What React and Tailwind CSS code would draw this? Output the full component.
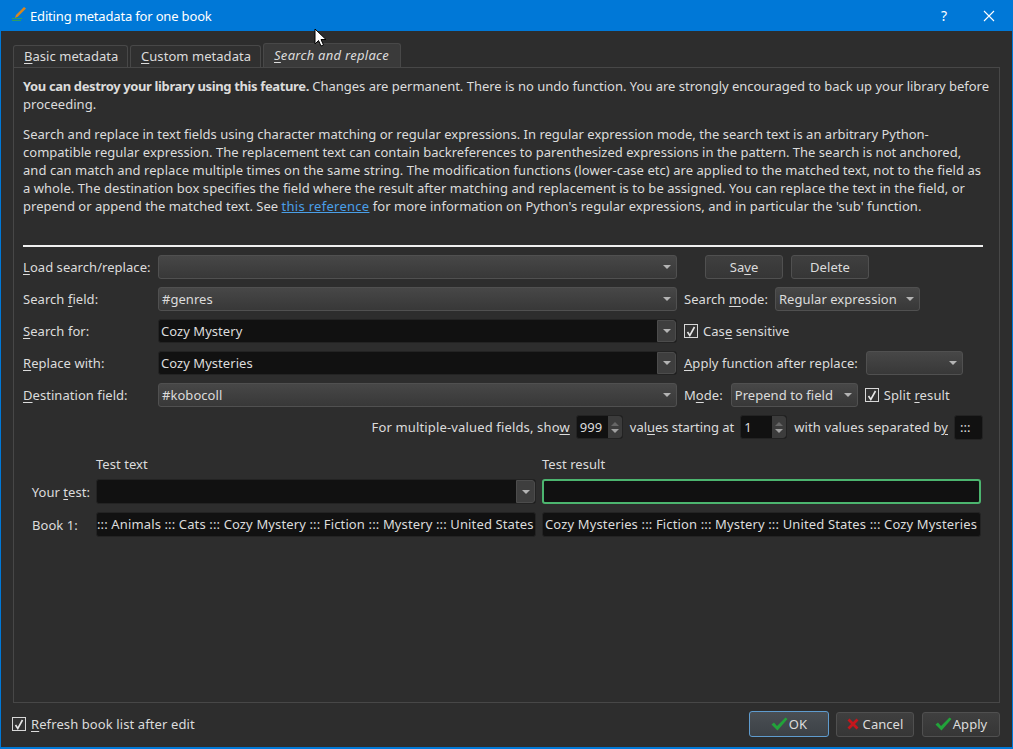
import React from "react";

const U = ({ children }) => <span className="underline underline-offset-2 decoration-1">{children}</span>;

function Arrow() {
    return <span className="w-0 h-0 border-x-[4px] border-x-transparent border-t-[4px] border-t-[#b4b4b4]"></span>;
}

function Combo({ value, className = "" }) {
    return (
        <div className={`h-[24px] flex items-center justify-between pl-[3px] pr-[5px] rounded-[3px] border border-[#505050] bg-gradient-to-b from-[#474747] to-[#383838] ${className}`}>
            <span className="whitespace-nowrap">{value}</span>
            <Arrow />
        </div>
    );
}

function EditCombo({ value, className = "" }) {
    return (
        <div className={`flex rounded-[3px] border border-[#232323] bg-[#111111] ${className}`}>
            <span className="flex-1 pl-[2px] leading-[22px]">{value}</span>
            <span className="w-[19px] flex items-center justify-center bg-[#3e3e3e] border border-[#4c4c4c] rounded-r-[3px]">
                <Arrow />
            </span>
        </div>
    );
}

function Check({ className = "" }) {
    return (
        <span className={`w-[14px] h-[14px] shrink-0 border border-[#d8d8d8] bg-[#333333] flex items-center justify-center ${className}`}>
            <svg width="10" height="11" viewBox="0 0 10 11" fill="none">
                <path d="M1.5 6 L3.8 9.5 L8.5 1" stroke="#e6e6e6" strokeWidth="1.6" />
            </svg>
        </span>
    );
}

function Spin({ value, className = "" }) {
    return (
        <div className={`h-[24px] flex rounded-[3px] border border-[#232323] bg-[#111111] ${className}`}>
            <span className="flex-1 pl-[3px] leading-[22px]">{value}</span>
            <span className="w-[14px] flex flex-col items-center justify-center gap-[3px] bg-[#3c3c3c] rounded-r-[3px]">
                <span className="w-0 h-0 border-x-[4px] border-x-transparent border-b-[4px] border-b-[#666666]"></span>
                <span className="w-0 h-0 border-x-[4px] border-x-transparent border-t-[4px] border-t-[#a0a0a0]"></span>
            </span>
        </div>
    );
}

function Tab({ active, children, className = "" }) {
    return (
        <div className={`border border-[#484848] border-b-0 rounded-t-[3px] flex items-center pl-[10px] ${active ? "h-[24px] pb-[2px] bg-[#3a3a3a] italic tracking-[0.28px]" : "h-[22px] pb-[1px] bg-[#303030]"} ${className}`}>
            {children}
        </div>
    );
}

function Row({ label, children }) {
    return (
        <div className="flex items-center h-[24px]">
            <div className="w-[135px] shrink-0 whitespace-nowrap">{label}</div>
            {children}
        </div>
    );
}

function PushButton({ children, className = "" }) {
    return (
        <div className={`flex items-center justify-center rounded-[3px] border border-[#505050] bg-gradient-to-b from-[#3f3f3f] to-[#363636] ${className}`}>
            {children}
        </div>
    );
}

const Tick = () => (
    <svg width="17" height="14" viewBox="0 0 17 14">
        <path d="M0.5 7.5 L3 5.5 L6 9 L14.5 0.5 L16.5 2 L6.5 13.5 Z" fill="#22a33a" />
    </svg>
);

export default function App() {
    return (
        <div className="w-[1013px] h-[749px] overflow-hidden relative flex flex-col bg-[#0078d7] text-[13px] leading-[18px] tracking-[0.05px] text-[#dcdcdc] font-['Noto_Sans',sans-serif] pl-[1px] pr-[1px] pb-[2px]">
            {/* title bar */}
            <div className="h-[31px] shrink-0 flex items-center text-white pl-[10px] tracking-[-0.17px]">
                <svg width="16" height="16" viewBox="0 0 16 16" className="mr-[3px] mb-[3px]">
                    <path d="M4 12 L5 9 L13 1 L15 2.5 L7 10.5 Z" fill="#d9861f" />
                    <path d="M1 12.5 H11 M1 14.5 H10" stroke="#2f9e62" strokeWidth="1" />
                </svg>
                <span>Editing metadata for one book</span>
                <span className="ml-auto mr-[36px] text-[14px]">?</span>
                <svg width="12" height="12" viewBox="0 0 12 12" className="mr-[17px]">
                    <path d="M1 1 L11 11 M11 1 L1 11" stroke="#ffffff" strokeWidth="1.1" />
                </svg>
            </div>

            <div className="flex-1 bg-[#2d2d2d] flex flex-col pl-[12px] pr-[12px] min-h-0">
                {/* tabs */}
                <div className="h-[36px] shrink-0 flex items-end gap-[2px]">
                    <Tab className="w-[115px]"><span><U>B</U>asic metadata</span></Tab>
                    <Tab className="w-[131px]"><span><U>C</U>ustom metadata</span></Tab>
                    <Tab active className="w-[138px]"><span><U>S</U>earch and replace</span></Tab>
                </div>

                {/* pane */}
                <div className="h-[636px] shrink-0 border border-[#474747] pl-[9px] pr-[10px] pt-[9px]">
                    <div className="whitespace-pre tracking-[-0.015px]">
                        <span className="font-bold tracking-[-0.37px]">You can destroy your library using this feature.</span>
                        {" Changes are permanent. There is no undo function. You are strongly encouraged to back up your library before"}
                    </div>
                    <div>proceeding.</div>
                    <div className="mt-[12px] whitespace-pre">
                        <div className="tracking-[0.01px]">Search and replace in text fields using character matching or regular expressions. In regular expression mode, the search text is an arbitrary Python-</div>
                        <div className="tracking-[0.015px]">compatible regular expression. The replacement text can contain backreferences to parenthesized expressions in the pattern. The search is not anchored,</div>
                        <div>and can match and replace multiple times on the same string. The modification functions (lower-case etc) are applied to the matched text, not to the field as</div>
                        <div>a whole. The destination box specifies the field where the result after matching and replacement is to be assigned. You can replace the text in the field, or</div>
                        <div className="tracking-[0.02px]">
                            {"prepend or append the matched text. See "}
                            <span className="text-[#4a9fe8] underline tracking-[0.28px]">this reference</span>
                            {" for more information on Python's regular expressions, and in particular the 'sub' function."}
                        </div>
                    </div>

                    <div className="h-[2px] bg-[#f0f0f0] mt-[30px] mr-[6px]"></div>

                    <div className="mt-[8px] flex flex-col gap-[8px]">
                        <Row label={<><U>L</U>oad search/replace:</>}>
                            <Combo value="" className="w-[519px]" />
                            <PushButton className="w-[78px] h-[24px] ml-[28px]"><span>Sa<U>v</U>e</span></PushButton>
                            <PushButton className="w-[78px] h-[24px] ml-[8px]">Delete</PushButton>
                        </Row>
                        <Row label={<>Search <U>f</U>ield:</>}>
                            <Combo value="#genres" className="w-[519px]" />
                            <span className="ml-[7px] whitespace-nowrap">Search <U>m</U>ode:</span>
                            <Combo value="Regular expression" className="w-[145px] ml-[7px]" />
                        </Row>
                        <Row label={<><U>S</U>earch for:</>}>
                            <EditCombo value="Cozy Mystery" className="w-[519px] h-[24px]" />
                            <Check className="ml-[7px]" />
                            <span className="ml-[5px] whitespace-nowrap">Cas<U>e</U> sensitive</span>
                        </Row>
                        <Row label={<><U>R</U>eplace with:</>}>
                            <EditCombo value="Cozy Mysteries" className="w-[519px] h-[24px]" />
                            <span className="ml-[7px] whitespace-nowrap"><U>A</U>pply function after replace:</span>
                            <Combo value="" className="w-[97px] ml-[8px]" />
                        </Row>
                        <Row label={<><U>D</U>estination field:</>}>
                            <Combo value="#kobocoll" className="w-[519px]" />
                            <span className="ml-[7px] whitespace-nowrap">M<U>o</U>de:</span>
                            <Combo value="Prepend to field" className="w-[127px] ml-[8px]" />
                            <Check className="ml-[7px]" />
                            <span className="ml-[5px] whitespace-nowrap tracking-[0.12px]">Split <U>r</U>esult</span>
                        </Row>
                        <div className="flex items-center justify-end h-[24px] pr-[6px]">
                            <span className="whitespace-nowrap tracking-[0.15px]">For multiple-valued fields, sho<U>w</U></span>
                            <Spin value="999" className="w-[47px] ml-[6px]" />
                            <span className="ml-[7px] whitespace-nowrap tracking-[-0.05px]">val<U>u</U>es starting at</span>
                            <Spin value="1" className="w-[47px] ml-[6px]" />
                            <span className="ml-[7px] whitespace-nowrap tracking-[0.12px]">with values separated b<U>y</U></span>
                            <span className="w-[29px] h-[25px] ml-[6px] rounded-[3px] border border-[#232323] bg-[#111111] pl-[5px] leading-[23px]">:::</span>
                        </div>
                    </div>

                    <div className="mt-[16px] grid grid-cols-[67px_440px_439px] gap-x-[6px] gap-y-[8px] items-center">
                        <div className="-mb-[2px]"></div>
                        <div className="-mb-[2px]">Test text</div>
                        <div className="-mb-[2px]">Test result</div>
                        <div className="text-right whitespace-nowrap">Your <U>t</U>est:</div>
                        <EditCombo value="" className="h-[25px]" />
                        <div className="h-[25px] rounded-[3px] border-2 border-[#4cb56f] bg-[#111111]"></div>
                        <div className="pl-[9px]">Book 1:</div>
                        <div className="h-[25px] rounded-[3px] bg-[#111111] border border-[#232323] leading-[23px] whitespace-nowrap overflow-hidden tracking-[0.13px]">::: Animals ::: Cats ::: Cozy Mystery ::: Fiction ::: Mystery ::: United States</div>
                        <div className="h-[25px] rounded-[3px] bg-[#111111] border border-[#232323] pl-[2px] leading-[23px] whitespace-nowrap overflow-hidden tracking-[0.14px]">Cozy Mysteries ::: Fiction ::: Mystery ::: United States ::: Cozy Mysteries</div>
                    </div>
                </div>

                {/* bottom bar */}
                <div className="flex-1 flex items-center -ml-[1px] pb-[2px]">
                    <Check />
                    <span className="ml-[5px] tracking-[0.1px]"><U>R</U>efresh book list after edit</span>
                    <div className="ml-auto flex items-center">
                        <div className="w-[80px] h-[26px] flex items-center justify-center gap-[1px] rounded-[3px] border border-[#5f9ccf] bg-gradient-to-b from-[#4a4f54] to-[#3c4146]">
                            <Tick /><span>OK</span>
                        </div>
                        <PushButton className="w-[78px] h-[25px] ml-[7px] gap-[4px]">
                            <svg width="12" height="12" viewBox="0 0 12 12">
                                <path d="M1.5 1.5 L10.5 10.5 M10.5 1.5 L1.5 10.5" stroke="#c4161c" strokeWidth="2.8" />
                            </svg>
                            <span>Cancel</span>
                        </PushButton>
                        <PushButton className="w-[78px] h-[25px] ml-[8px] gap-[1px]"><Tick /><span>Apply</span></PushButton>
                    </div>
                </div>
            </div>

            {/* mouse cursor from the capture */}
            <svg width="13" height="20" viewBox="0 0 13 20" className="absolute left-[314px] top-[28px]">
                <path d="M1 1 V16 L4.5 12.5 L7 18 L9.5 17 L7 11.5 H12 Z" fill="#ffffff" stroke="#000000" strokeWidth="1" />
            </svg>
        </div>
    );
}
